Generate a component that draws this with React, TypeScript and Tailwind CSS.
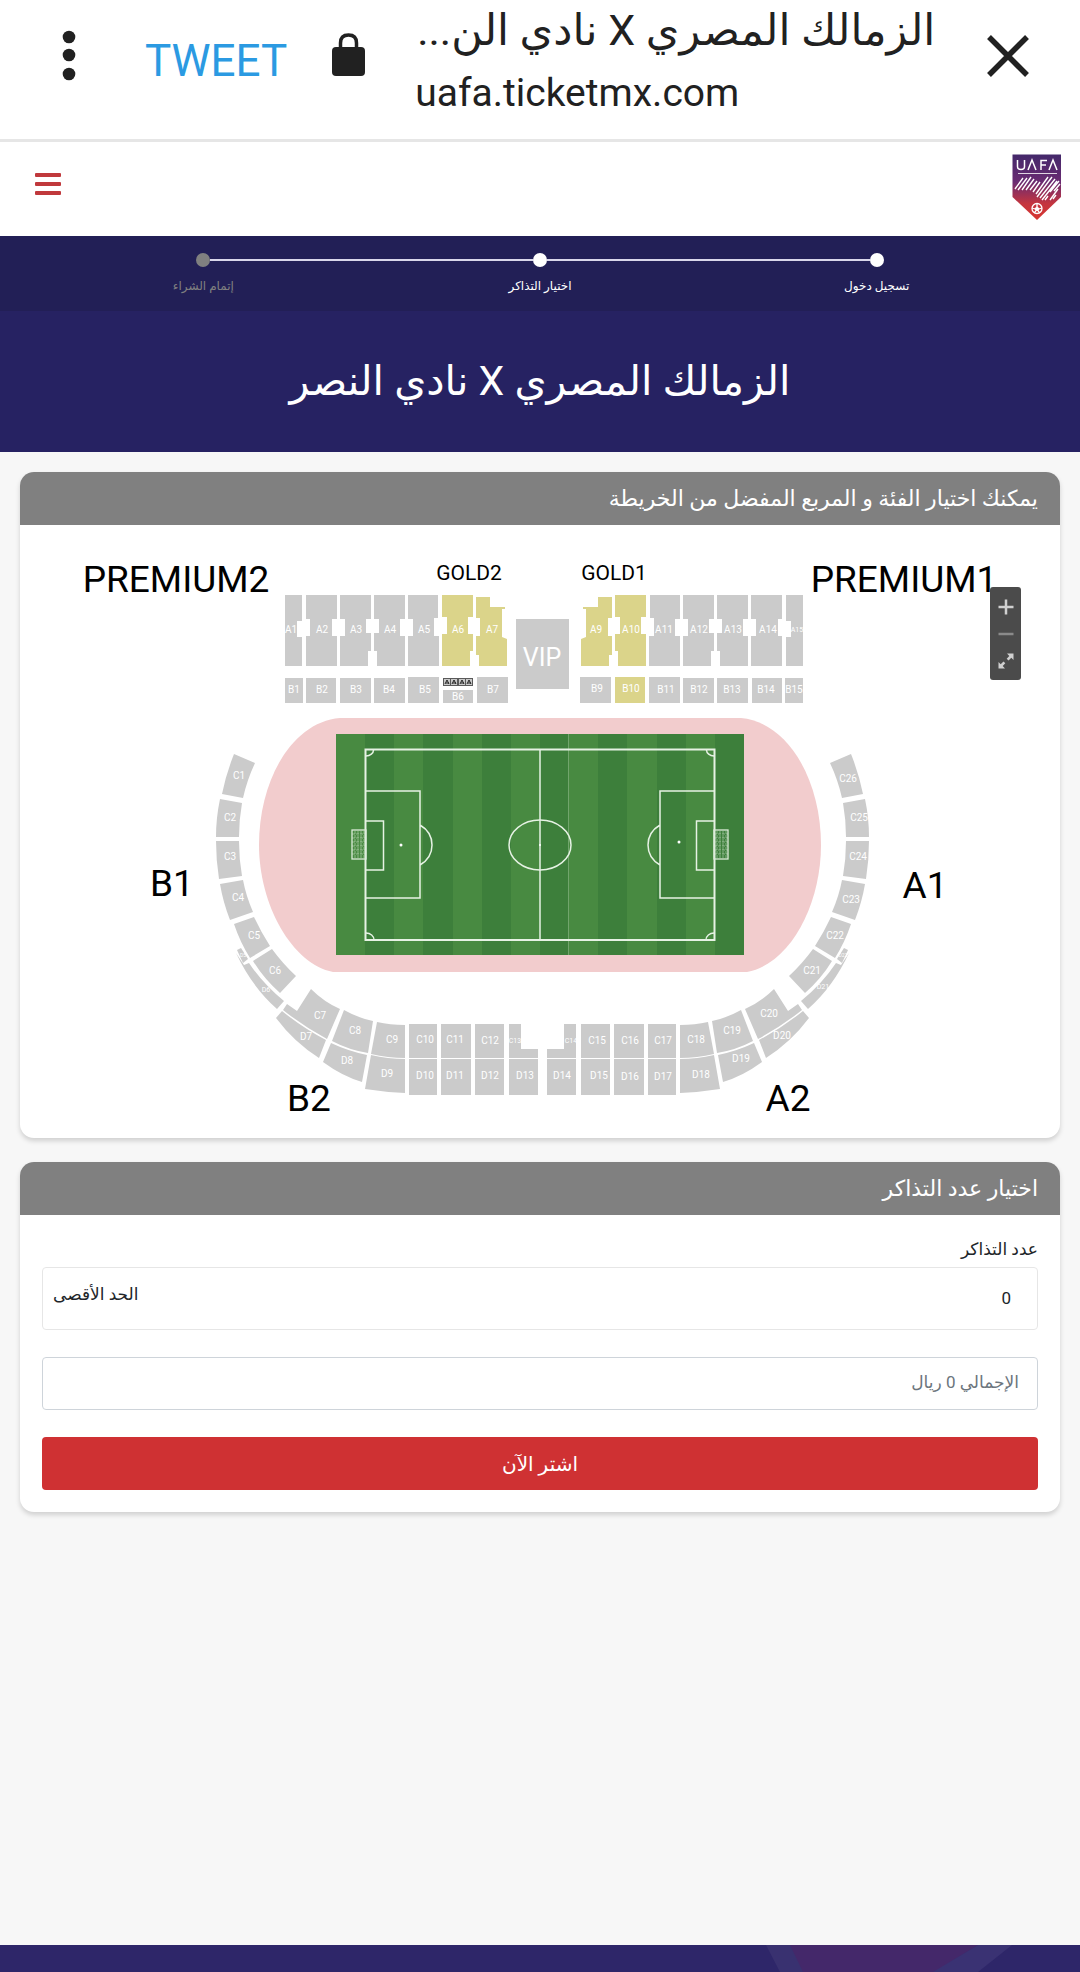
import React from "react";

type Label = [string, number, number, number?];

const upperStand = [
  "M285 595H302V621H297V637H302V666H285Z",
  "M306 595H337V619H332V636H337V666H306V636H310V619H306Z",
  "M340 595H371V619H366V633H371V651H368V666H340V636H345V619H340Z",
  "M374 595H405V619H400V636H405V666H377V651H374V633H379V619H374Z",
  "M408 595H438V618H434V636H439V666H408V636H413V619H408Z",
  "M285 678H303V703H285Z",
  "M306 678H336V703H306Z",
  "M340 678H371V703H340Z",
  "M374 678H405V703H374Z",
  "M408 677H439V703H408Z",
  "M477 677H508V703H477Z",
];

const goldStand = [
  "M442 595H473V617H468V634H473V651H470V666H442V634H447V617H442Z",
  "M476 597H490V607H505V609H502V637L507 639V666H479V655H476V636H480V618H476Z",
];

const lowerStand = [
  "M234 754L255 763Q247 780 243 798L222 794Q226 774 234 754Z",
  "M220 799L242 803Q239 820 239 837H216Q216 818 220 799Z",
  "M216 841H239Q239 859 242 876L219 879Q216 860 216 841Z",
  "M220 884L243 880Q246 896 253 912L230 920Q223 902 220 884Z",
  "M234 924L254 917Q261 932 270 946L250 958Q240 942 234 924Z",
  "M253 961L272 949Q283 964 296 976L280 993Q264 979 253 961Z",
  "M237 950L241 948L248 959L243 963Z",
  "M236 953L244 965L249 963Q263 984 284 1001L277 1009Q252 987 236 953Z",
  "M311 989Q324 1002 340 1009L327 1039Q303 1026 283 1010L287 1004L297 1011Z",
  "M282 1011Q303 1028 326 1040L319 1058Q294 1042 276 1018Z",
  "M344 1010Q358 1018 373 1021L368 1053Q349 1050 332 1041Z",
  "M331 1043Q348 1051 367 1055L362 1082Q342 1076 323 1062Z",
  "M377 1022Q390 1025 405 1025V1058Q388 1058 371 1054Z",
  "M371 1055Q388 1059 405 1059V1093Q384 1092 365 1089Z",
  "M409 1024H437V1058H409Z",
  "M409 1059H437V1095H409Z",
  "M441 1024H471V1058H441Z",
  "M441 1059H471V1095H441Z",
  "M475 1024H504V1058H475Z",
  "M475 1059H504V1095H475Z",
  "M509 1024H521V1049H538V1058H509Z",
  "M509 1059H538V1095H509Z",
];

const seatLabels: Label[] = [
  ["A1", 291, 633], ["A2", 322, 633], ["A3", 356, 633], ["A4", 390, 633], ["A5", 424, 633], ["A6", 458, 633], ["A7", 492, 633],
  ["A9", 596, 633], ["A10", 631, 633], ["A11", 664, 633], ["A12", 699, 633], ["A13", 733, 633], ["A14", 768, 633], ["A15", 797, 632, 7],
  ["B1", 294, 693], ["B2", 322, 693], ["B3", 356, 693], ["B4", 389, 693], ["B5", 425, 693], ["B6", 458, 700], ["B7", 493, 693],
  ["B9", 597, 692], ["B10", 631, 692], ["B11", 666, 693], ["B12", 699, 693], ["B13", 732, 693], ["B14", 766, 693], ["B15", 794, 693],
  ["C1", 239, 779], ["C2", 230, 821], ["C3", 230, 860], ["C4", 238, 901], ["C5", 254, 939], ["C6", 275, 974], ["C7", 320, 1019],
  ["C8", 355, 1034], ["C9", 392, 1043], ["C10", 425, 1043], ["C11", 455, 1043], ["C12", 490, 1044], ["C13", 515, 1043, 7],
  ["D5", 243, 957, 5], ["D6", 266, 992, 7], ["D7", 306, 1040], ["D8", 347, 1064], ["D9", 387, 1077], ["D10", 425, 1079], ["D11", 455, 1079], ["D12", 490, 1079], ["D13", 525, 1079],
  ["C14", 571, 1043, 7], ["C15", 597, 1044], ["C16", 630, 1044], ["C17", 663, 1044], ["C18", 696, 1043], ["C19", 732, 1034], ["C20", 769, 1017],
  ["C21", 812, 974], ["C22", 835, 939], ["C23", 851, 903], ["C24", 858, 860], ["C25", 859, 821], ["C26", 848, 782],
  ["D14", 562, 1079], ["D15", 599, 1079], ["D16", 630, 1080], ["D17", 663, 1080], ["D18", 701, 1078], ["D19", 741, 1062], ["D20", 782, 1039],
  ["D21", 823, 989, 7], ["D22", 843, 957, 5],
];

const zoneLabels: Label[] = [
  ["PREMIUM2", 176, 592, 37],
  ["PREMIUM1", 904, 592, 37],
  ["GOLD2", 469, 580, 21],
  ["GOLD1", 614, 580, 21],
  ["B1", 172, 896, 37],
  ["A1", 925, 898, 37],
  ["B2", 309, 1111, 37],
  ["A2", 788, 1111, 37],
];

const stripes = Array.from({ length: 14 }, (_, i) => i);

function Net({ x }: { x: number }) {
  return (
    <g stroke="#dcebd9" fill="none">
      <rect x={x} y={830} width={14} height={29} strokeWidth={1.3} />
      <path
        d={`M${x + 3} 831V858M${x + 6} 831V858M${x + 9} 831V858M${x + 12} 831V858M${x} 834H${x + 14}M${x} 838H${x + 14}M${x} 842H${x + 14}M${x} 846H${x + 14}M${x} 850H${x + 14}M${x} 854H${x + 14}`}
        strokeWidth={0.8}
        strokeDasharray="3 1"
        opacity={0.6}
      />
    </g>
  );
}

function Pitch() {
  return (
    <g>
      <path d="M340 718H741C788 722 821 780 821 845C821 905 790 964 747 972H333C292 964 259 905 259 845C259 780 292 722 340 718Z" fill="#f2cccd" />
      {stripes.map((i) => (
        <rect
          key={i}
          x={Math.round(336 + (i * 408) / 14)}
          y={734}
          width={Math.round(336 + ((i + 1) * 408) / 14) - Math.round(336 + (i * 408) / 14)}
          height={221}
          fill={i % 2 ? "#3d7f3b" : "#488a41"}
        />
      ))}
      <path d="M568.5 734V955" stroke="#7fae78" strokeWidth={0.8} />
      <g fill="none" stroke="#e6f2e4" strokeWidth={1.5}>
        <rect x={365.5} y={749.5} width={349} height={190.5} strokeWidth={2} />
        <path d="M540 750V940" />
        <ellipse cx={540} cy={845} rx={31} ry={25} />
        <path d="M366 791H420V898H366M366 821H383.500V870H366M420 825Q432 832 432 845Q432 858 420 865" />
        <path d="M714 791H660V898H714M714 821H696.500V870H714M660 825Q648 832 648 845Q648 858 660 865" />
        <path d="M373.500 750A8 6 0 0 1 366 756M706.500 750A8 6 0 0 0 714 756M374 940A8 7 0 0 0 366 933M706 940A8 7 0 0 1 714 933" />
      </g>
      <g fill="#fff">
        <circle cx={401} cy={845} r={1.5} />
        <circle cx={679} cy={842} r={1.5} />
        <circle cx={540} cy={845} r={1} />
      </g>
      <Net x={352} />
      <Net x={714} />
    </g>
  );
}

function StadiumMap() {
  return (
    <svg viewBox="20 525 1040 613" direction="ltr" className="block w-full font-['Roboto',sans-serif]" role="img" aria-label="خريطة الملعب">
      <g fill="#cbcbcb">
        {upperStand.map((d) => <path key={d} d={d} />)}
        <g transform="translate(1088 0) scale(-1 1)">
          {upperStand.map((d) => <path key={d} d={d} />)}
        </g>
        {lowerStand.map((d) => <path key={d} d={d} />)}
        <g transform="translate(1085 0) scale(-1 1)">
          {lowerStand.map((d) => <path key={d} d={d} />)}
        </g>
        <path d="M443 690H473V703H443Z" />
        <path d="M516 619H569V689H516Z" />
      </g>
      <g fill="#dbd48a">
        {goldStand.map((d) => <path key={d} d={d} />)}
        <g transform="translate(1088 0) scale(-1 1)">
          {goldStand.map((d) => <path key={d} d={d} />)}
        </g>
        <path d="M615 677H645V703H615Z" />
      </g>
      <g>
        <rect x={443} y={678} width={30} height={8} fill="#5a5a5a" />
        {[447, 454, 462, 469].map((x) => (
          <g key={x}>
            <rect x={x - 3} y={679} width={6} height={6} fill="#c9c9c9" />
            <path d={`M${x - 2} 684L${x} 680L${x + 2} 684M${x - 1} 683H${x + 2}`} stroke="#222" fill="none" />
          </g>
        ))}
      </g>
      <Pitch />
      <g fill="#fff" textAnchor="middle">
        {seatLabels.map(([t, x, y, s]) => (
          <text key={t} x={x} y={y} fontSize={s ?? 10}>{t}</text>
        ))}
        <text x={542} y={666} fontSize={25}>VIP</text>
      </g>
      <g fill="#000" textAnchor="middle">
        {zoneLabels.map(([t, x, y, s]) => (
          <text key={t} x={x} y={y} fontSize={s}>{t}</text>
        ))}
      </g>
    </svg>
  );
}

function Logo() {
  return (
    <svg viewBox="0 0 50 67" className="h-[67px] w-[50px]" aria-hidden="true">
      <defs>
        <linearGradient id="shield" x1="0" y1="0" x2="0" y2="1">
          <stop offset="0" stopColor="#43286a" />
          <stop offset="0.42" stopColor="#6a2b72" />
          <stop offset="0.75" stopColor="#c4353f" />
          <stop offset="1" stopColor="#d8352f" />
        </linearGradient>
      </defs>
      <path d="M0.500 0.500H49V43L25 66L0.500 43Z" fill="url(#shield)" />
      <g fill="none" stroke="#fff" strokeWidth={1.5}>
        <path d="M5.500 6V12.500Q5.500 15.500 9 15.500Q12.500 15.500 12.500 12.500V6M16 16L20 6L24 16M29 16V6.500H35M29 11H34M37 16L41 6L45 16" />
        <path d="M6 19.500H45" strokeWidth={1} opacity={0.8} />
        <path d="M3 35L11 24M6 36L15 24M10 36L19 23M14 36L22 25M18 36L25 27M21 38L28 28M24 40L36 23M25 43L40 23M28 44L43 25M30 46L45 27M33 46L36 42M38 38L47 27M42 37L48 30M38 46L46 35M41 45L44 41" strokeWidth={1.4} />
        <circle cx={25} cy={54.500} r={5} strokeWidth={1.3} />
        <path d="M25 50V53M20 54L23 55M30 54L27 55M22 59L24 57M28 59L26 57" strokeWidth={1.3} />
      </g>
      <path d="M25 52.500L27.500 54.300L26.500 57H23.500L22.500 54.300Z" fill="#fff" />
    </svg>
  );
}

const steps = [
  { label: "تسجيل دخول", done: true },
  { label: "اختيار التذاكر", done: true },
  { label: "إتمام الشراء", done: false },
];

function Steps() {
  return (
    <ol className="grid h-[75px] grid-cols-3 bg-[#221f56] px-[35px] pt-4">
      {steps.map((s, i) => (
        <li key={s.label} className="flex flex-col items-center gap-2">
          <div className="flex h-4 w-full items-center">
            <span className={i === 0 ? "h-[2px] flex-1" : "h-[2px] flex-1 bg-[#d9d6ea]"} />
            <span className={s.done ? "size-[14px] rounded-full bg-white" : "size-[14px] rounded-full bg-[#808080]"} />
            <span className={i === 2 ? "h-[2px] flex-1" : "h-[2px] flex-1 bg-[#d9d6ea]"} />
          </div>
          <span className={s.done ? "text-[12px] leading-5 text-white" : "text-[12px] leading-5 text-[#808080]"}>{s.label}</span>
        </li>
      ))}
    </ol>
  );
}

function Card({ title, children }: { title: string; children: React.ReactNode }) {
  return (
    <section className="overflow-hidden rounded-[14px] bg-white shadow-[0_3px_5px_rgba(0,0,0,0.16)]">
      <h2 className="flex h-[53px] items-center bg-[#808080] px-[22px] text-[22px] text-white">{title}</h2>
      {children}
    </section>
  );
}

function MapControls() {
  return (
    <div className="absolute top-[62px] right-[39px] flex w-[31px] flex-col rounded-[3px] bg-[#4b4b4b] py-1 text-[#d0d0d0]">
      <button type="button" aria-label="تكبير" className="flex h-[31px] items-center justify-center">
        <svg viewBox="0 0 16 16" className="size-4"><path d="M8 0.500V15.500M0.500 8H15.500" stroke="currentColor" strokeWidth={2.5} /></svg>
      </button>
      <button type="button" aria-label="تصغير" className="flex h-[23px] items-center justify-center text-[#8a8a8a]">
        <svg viewBox="0 0 16 16" className="size-4"><path d="M0.500 8H15.500" stroke="currentColor" strokeWidth={2.5} /></svg>
      </button>
      <button type="button" aria-label="ملء الشاشة" className="flex h-[31px] items-center justify-center">
        <svg viewBox="0 0 16 16" className="size-4" fill="currentColor">
          <path d="M9 0.500H15.500V7L13.300 4.800L10.500 7.500L8.700 5.700L11.300 3ZM7 15.500H0.500V9L2.700 11.200L5.500 8.500L7.300 10.300L4.700 13Z" />
        </svg>
      </button>
    </div>
  );
}

export default function App() {
  return (
    <div dir="rtl" className="flex min-h-screen flex-col bg-[#f7f7f7] font-['Roboto','DejaVu_Sans',sans-serif] text-[#212529]">
      <header className="flex h-[142px] items-start border-b-[3px] border-[#e6e6e6] bg-white pr-[50px] pl-[62px] text-[#212121]">
        <button type="button" aria-label="إغلاق" className="mt-[34px]">
          <svg viewBox="0 0 44 44" className="size-11"><path d="M3 3L41 41M41 3L3 41" stroke="currentColor" strokeWidth={5.5} /></svg>
        </button>
        <div className="mr-auto flex w-[520px] flex-col">
          <p className="text-[43px] leading-[60px] whitespace-nowrap">الزمالك المصري X نادي الن...</p>
          <p dir="ltr" className="mt-[5px] text-[39px] leading-[56px]">uafa.ticketmx.com</p>
        </div>
        <svg viewBox="0 0 33 44" className="mt-[33px] mr-[50px] h-11 w-[33px]">
          <path d="M8.500 16V10Q8.500 2 16.500 2Q24.500 2 24.500 10V16" fill="none" stroke="currentColor" strokeWidth={3.5} />
          <rect x={0} y={14} width={33} height={29} rx={4} fill="currentColor" />
        </svg>
        <button type="button" className="mt-[31px] mr-[45px] text-[44px] leading-[60px] text-[#2b9ae2]">TWEET</button>
        <button type="button" aria-label="القائمة" className="mt-[28px] mr-[69px]">
          <svg viewBox="0 0 14 54" className="h-[54px] w-[14px]" fill="currentColor">
            <circle cx={7} cy={9} r={6.3} /><circle cx={7} cy={27} r={6.3} /><circle cx={7} cy={46} r={6.3} />
          </svg>
        </button>
      </header>

      <nav className="flex h-[94px] items-center justify-between bg-white pr-[18px] pb-[3px] pl-[35px]">
        <a href="#" aria-label="UAFA"><Logo /></a>
        <button type="button" aria-label="القائمة الرئيسية" className="flex w-[26px] flex-col gap-[5px] pb-[7px]">
          <span className="h-1 rounded-[1px] bg-[#c0393c]" />
          <span className="h-1 rounded-[1px] bg-[#c0393c]" />
          <span className="h-1 rounded-[1px] bg-[#c0393c]" />
        </button>
      </nav>

      <Steps />
      <div className="flex h-[141px] items-center justify-center bg-[#262262]">
        <h1 className="text-[41px] text-white">الزمالك المصري X نادي النصر</h1>
      </div>

      <main className="flex flex-1 flex-col gap-6 px-5 pt-5 pb-10">
        <Card title="يمكنك اختيار الفئة و المربع المفضل من الخريطة">
          <div className="relative">
            <StadiumMap />
            <MapControls />
          </div>
        </Card>

        <Card title="اختيار عدد التذاكر">
          <form className="flex flex-col px-[22px] pt-5 pb-[22px]" onSubmit={(e) => e.preventDefault()}>
            <label htmlFor="tickets" className="mb-1 text-[17px] leading-7">عدد التذاكر</label>
            <div className="flex h-[63px] items-center justify-between rounded-[4px] border border-[#e6e6e6] px-[10px]">
              <input id="tickets" type="text" inputMode="numeric" defaultValue="0" className="w-24 bg-transparent px-4 text-[17px] outline-none" />
              <span className="pb-2 text-[17px]">الحد الأقصى</span>
            </div>
            <input aria-label="الإجمالي" readOnly value="الإجمالي 0 ريال" className="mt-[27px] h-[53px] rounded-[4px] border border-[#ced4da] px-[18px] pb-1 text-[17px] text-[#6c757d] outline-none" />
            <button type="submit" className="mt-[27px] h-[53px] rounded-[4px] bg-[#cf3133] text-[20px] text-white">اشتر الآن</button>
          </form>
        </Card>
      </main>

      <footer className="h-[27px] overflow-hidden bg-[#2e2669]">
        <svg viewBox="0 0 1080 27" preserveAspectRatio="none" className="block h-[27px] w-full" aria-hidden="true">
          <path d="M766 0H792L804 27H780Z" fill="#393170" />
          <path d="M790 0H978L935 27H803Z" fill="#44286a" />
          <path d="M978 0H1012L978 27H933Z" fill="#3a3273" />
        </svg>
      </footer>
    </div>
  );
}
